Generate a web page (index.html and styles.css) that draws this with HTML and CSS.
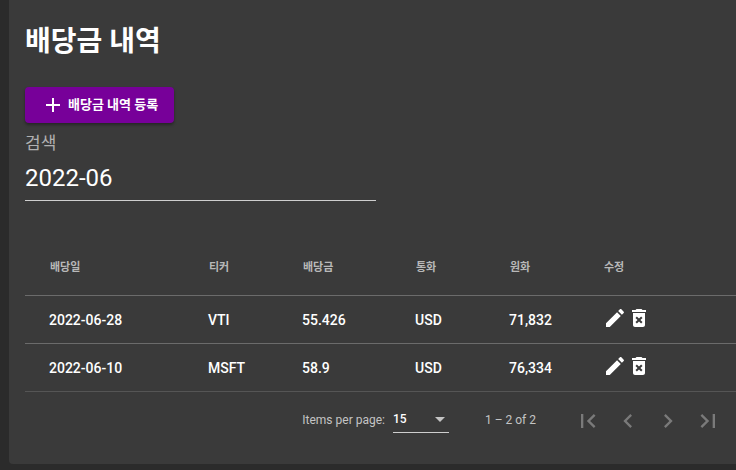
FILE: index.html
```html
<!DOCTYPE html>
<html lang="ko">
<head>
  <meta charset="UTF-8">
  <meta name="viewport" content="width=device-width, initial-scale=1.0">
  <title>배당금 내역</title>
  <link rel="stylesheet" href="styles.css">
</head>
<body>
  <!-- icons -->
  <svg class="sprite" aria-hidden="true">
    <symbol id="edit" viewBox="0 0 24 24"><path d="M3 17.25V21h3.75L17.81 9.94l-3.75-3.75L3 17.25zM20.71 7.04c.39-.39.39-1.02 0-1.41l-2.34-2.34c-.39-.39-1.02-.39-1.41 0l-1.83 1.83 3.75 3.75 1.83-1.83z"/></symbol>
    <symbol id="delete" viewBox="0 0 24 24"><path fill-rule="evenodd" d="M6 19c0 1.1.9 2 2 2h8c1.1 0 2-.9 2-2V7H6v12zm2.46-7.12l1.41-1.41L12 12.59l2.12-2.12 1.41 1.41L13.41 14l2.12 2.12-1.41 1.41L12 15.41l-2.12 2.12-1.41-1.41L10.59 14l-2.13-2.12zM15.5 4l-1-1h-5l-1 1H5v2h14V4z"/></symbol>
  </svg>
  <main class="card">
    <h1 class="title">배당금 내역</h1>
    <button class="add-button" type="button">
      <svg class="icon" viewBox="0 0 24 24"><path d="M19 13h-6v6h-2v-6H5v-2h6V5h2v6h6v2z"/></svg>
      <span class="add-text">배당금 내역 등록</span>
    </button>
    <div class="search">
      <label class="search-label" for="search">검색</label>
      <input class="search-input" id="search" type="text" value="2022-06">
    </div>
    <table class="table">
      <colgroup>
        <col class="col-date">
        <col class="col-ticker">
        <col class="col-amount">
        <col class="col-currency">
        <col class="col-won">
        <col>
      </colgroup>
      <thead>
        <tr>
          <th>배당일</th>
          <th>티커</th>
          <th>배당금</th>
          <th>통화</th>
          <th>원화</th>
          <th>수정</th>
        </tr>
      </thead>
      <tbody>
        <tr>
          <td>2022-06-28</td>
          <td>VTI</td>
          <td>55.426</td>
          <td>USD</td>
          <td>71,832</td>
          <td>
            <div class="actions">
              <button class="action" type="button" aria-label="수정"><svg class="icon"><use href="#edit"/></svg></button>
              <button class="action" type="button" aria-label="삭제"><svg class="icon"><use href="#delete"/></svg></button>
            </div>
          </td>
        </tr>
        <tr>
          <td>2022-06-10</td>
          <td>MSFT</td>
          <td>58.9</td>
          <td>USD</td>
          <td>76,334</td>
          <td>
            <div class="actions">
              <button class="action" type="button" aria-label="수정"><svg class="icon"><use href="#edit"/></svg></button>
              <button class="action" type="button" aria-label="삭제"><svg class="icon"><use href="#delete"/></svg></button>
            </div>
          </td>
        </tr>
      </tbody>
    </table>
    <div class="paginator">
      <label for="page-size">Items per page:</label>
      <select class="page-size" id="page-size">
        <option>5</option>
        <option>10</option>
        <option selected>15</option>
      </select>
      <span class="range">1 – 2 of 2</span>
      <nav class="pages">
        <button class="page-button" type="button" aria-label="First page" disabled><svg class="page-icon" viewBox="0 0 24 24"><path d="M18.41 16.59L13.82 12l4.59-4.59L17 6l-6 6 6 6zM6 6h2v12H6z"/></svg></button>
        <button class="page-button" type="button" aria-label="Previous page" disabled><svg class="page-icon" viewBox="0 0 24 24"><path d="M15.41 7.41L14 6l-6 6 6 6 1.41-1.41L10.83 12z"/></svg></button>
        <button class="page-button" type="button" aria-label="Next page" disabled><svg class="page-icon" viewBox="0 0 24 24"><path d="M10 6L8.59 7.41 13.17 12l-4.58 4.59L10 18l6-6z"/></svg></button>
        <button class="page-button" type="button" aria-label="Last page" disabled><svg class="page-icon" viewBox="0 0 24 24"><path d="M5.59 7.41L10.18 12l-4.59 4.59L7 18l6-6-6-6zM16 6h2v12h-2z"/></svg></button>
      </nav>
    </div>
  </main>
</body>
</html>
```
FILE: styles.css
```css
* {
  box-sizing: border-box;
}
body {
  margin: 0;
  padding-left: 9px;
  background: #2b2b2b;
  color: #fff;
  font-family: Roboto, "Noto Sans CJK KR", sans-serif;
  font-size: 14px;
}
button, input, select {
  font: inherit;
  color: inherit;
}
.sprite {
  display: none;
}
.card {
  padding: 24px 0 16px 16px;
  border-radius: 0 0 0 4px;
  background: #3a3a3a;
}
.title {
  margin: 0 0 27px;
  font-size: 28px;
  line-height: 36px;
  font-weight: 700;
}
.icon {
  display: block;
  width: 24px;
  height: 24px;
  fill: currentColor;
}
.add-button {
  display: flex;
  align-items: center;
  gap: 3px;
  height: 36px;
  padding: 0 16px;
  border: 0;
  border-radius: 4px;
  background: #770099;
  box-shadow: 0 2px 3px rgba(0, 0, 0, .35);
  font-size: 13px;
  font-weight: 700;
}
.add-text {
  padding-bottom: 3px;
}

/* search */
.search {
  width: 351px;
  max-width: 100%;
  padding-top: 8px;
  margin-bottom: 39px;
}
.search-label {
  display: block;
  font-size: 17px;
  line-height: 24px;
  color: #b0b0b0;
}
.search-input {
  display: block;
  width: 100%;
  height: 46px;
  padding: 0;
  border: 0;
  border-bottom: 1px solid #cecece;
  background: none;
  outline: none;
  font-size: 24px;
}

/* table */
.table {
  width: 100%;
  table-layout: fixed;
  border-collapse: separate;
  border-spacing: 0;
}
.col-date {
  width: 183px;
}
.col-ticker, .col-currency, .col-won {
  width: 94px;
}
.col-amount {
  width: 113px;
}
.table th, .table td {
  padding: 0;
  border-bottom: 1px solid #6b6b6b;
  text-align: left;
}
.table td:first-child {
  padding-left: 24px;
}
.table th {
  height: 56px;
  padding: 0 0 4px 1px;
  font-size: 11px;
  font-weight: 700;
  color: #b8b8b8;
}
.table th:first-child {
  padding-left: 25px;
}
.table td {
  height: 48px;
  font-weight: 500;
}
.table tbody tr:last-child td {
  border-bottom-color: #555;
}
.actions {
  display: flex;
  padding-bottom: 4px;
}
.action {
  padding: 0;
  border: 0;
  background: none;
}

/* paginator */
.paginator {
  display: flex;
  align-items: center;
  justify-content: flex-end;
  height: 56px;
  padding-right: 8px;
  font-size: 12px;
  color: #c4c4c4;
}
.page-size {
  width: 56px;
  height: 26px;
  margin: 0 36px 0 8px;
  padding: 0 0 2px;
  border: 0;
  border-bottom: 1px solid #cecece;
  border-radius: 0;
  appearance: none;
  outline: none;
  color: #fff;
  font-weight: 500;
  background: url("data:image/svg+xml,%3Csvg xmlns='http://www.w3.org/2000/svg' viewBox='0 0 10 5'%3E%3Cpath d='M0 0h10L5 5z' fill='%23c4c4c4'/%3E%3C/svg%3E") no-repeat right 4px center / 10px 5px;
}
.range {
  margin-right: 32px;
}
.pages {
  display: flex;
}
.page-button {
  display: flex;
  align-items: center;
  justify-content: center;
  width: 40px;
  height: 40px;
  padding: 2px 0 0;
  border: 0;
  background: none;
  color: #7a7a7a;
}
.page-icon {
  width: 28px;
  height: 28px;
  fill: currentColor;
}
```
